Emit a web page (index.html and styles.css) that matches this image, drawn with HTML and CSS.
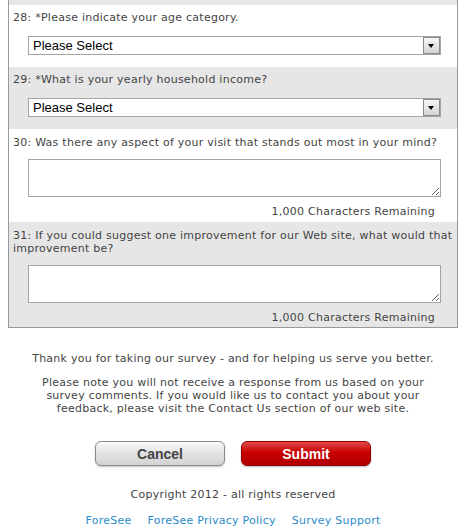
FILE: index.html
```html
<!DOCTYPE html>
<html lang="en">
<head>
    <meta charset="UTF-8">
    <title>Survey</title>
    <link rel="stylesheet" href="styles.css">
</head>
<body>
    <div class="survey-panel">
        <!-- tail of question 27 -->
        <div class="question alt prev"></div>

        <div class="question">
            <div class="label">28: *Please indicate your age category.</div>
            <div class="field">
                <div class="select-wrap">
                    <select>
                        <option>Please Select</option>
                    </select>
                    <span class="arrow"></span>
                </div>
            </div>
        </div>

        <div class="question alt">
            <div class="label">29: *What is your yearly household income?</div>
            <div class="field">
                <div class="select-wrap">
                    <select>
                        <option>Please Select</option>
                    </select>
                    <span class="arrow"></span>
                </div>
            </div>
        </div>

        <div class="question open">
            <div class="label">30: Was there any aspect of your visit that stands out most in your mind?</div>
            <div class="field">
                <textarea></textarea>
                <div class="counter">1,000 Characters Remaining</div>
            </div>
        </div>

        <div class="question alt open">
            <div class="label">31: If you could suggest one improvement for our Web site, what would that improvement be?</div>
            <div class="field">
                <textarea></textarea>
                <div class="counter">1,000 Characters Remaining</div>
            </div>
        </div>
    </div>

    <div class="footer">
        <p class="thanks">Thank you for taking our survey - and for helping us serve you better.</p>
        <p class="note">Please note you will not receive a response from us based on your survey comments. If you would like us to contact you about your feedback, please visit the Contact Us section of our web site.</p>

        <div class="actions">
            <button class="btn btn-cancel">Cancel</button>
            <button class="btn btn-submit">Submit</button>
        </div>

        <p class="copyright">Copyright 2012 - all rights reserved</p>

        <div class="links">
            <a href="#">ForeSee</a>
            <a href="#">ForeSee Privacy Policy</a>
            <a href="#">Survey Support</a>
        </div>
    </div>
</body>
</html>
```

FILE: styles.css
```css
body {
    margin: 0 8px;
    font-family: "DejaVu Sans", Verdana, sans-serif;
    font-size: 11px;
    letter-spacing: 0.25px;
    color: #444;
    background: #fff;
}

.survey-panel {
    width: 450px;
    box-sizing: border-box;
    border: 1px solid #999;
    border-top: none;
}

.question {
    padding: 6px 0 12px 4px;
    background: #fff;
}

.question.alt {
    background: #e6e6e6;
}

.question.prev {
    height: 5px;
    padding: 0;
}

.question.open {
    padding-top: 7px;
    padding-bottom: 3px;
}

.question.open:last-child {
    padding-bottom: 2px;
}

.label {
    line-height: 14px;
}

.open .label {
    line-height: 13px;
}

.field {
    margin: 11px 0 0 15px;
    width: 413px;
}

.open .field {
    margin-top: 10px;
}

.select-wrap {
    position: relative;
    height: 19px;
}

.select-wrap select {
    display: block;
    appearance: none;
    -webkit-appearance: none;
    width: 100%;
    height: 19px;
    box-sizing: border-box;
    margin: 0;
    border: 1px solid #a5a5a5;
    border-radius: 0;
    background: #fff;
    padding: 0 22px 0 4px;
    font-family: "Liberation Sans", Arial, sans-serif;
    font-size: 13px;
    letter-spacing: 0;
    color: #000;
    outline: none;
}

.select-wrap .arrow {
    position: absolute;
    top: 1px;
    right: 1px;
    width: 17px;
    height: 17px;
    box-sizing: border-box;
    border: 1px solid #8a8a8a;
    background: linear-gradient(#f6f6f6, #d4d4d4);
}

.select-wrap .arrow::after {
    content: "";
    position: absolute;
    left: 4px;
    top: 6px;
    border-left: 3.5px solid transparent;
    border-right: 3.5px solid transparent;
    border-top: 4px solid #000;
}

textarea {
    display: block;
    width: 413px;
    height: 38px;
    box-sizing: border-box;
    margin: 0;
    border: 1px solid #a5a5a5;
    border-radius: 0;
    padding: 2px;
    font-family: "Liberation Sans", Arial, sans-serif;
    font-size: 13px;
    outline: none;
}

.counter {
    margin-top: 8px;
    padding-right: 6px;
    text-align: right;
    line-height: 14px;
}

.footer {
    width: 450px;
    text-align: center;
}

.footer p {
    margin: 0;
    line-height: 13px;
}

.thanks {
    padding-top: 24px;
}

.footer .note {
    margin-top: 11px;
    padding: 0 30px;
}

.actions {
    display: flex;
    justify-content: center;
    gap: 16px;
    margin-top: 26px;
}

.btn {
    width: 130px;
    height: 25px;
    border-radius: 6px;
    font-family: "Liberation Sans", Arial, sans-serif;
    font-size: 14px;
    font-weight: bold;
    letter-spacing: 0;
    cursor: pointer;
    box-shadow: 0 1px 2px rgba(0, 0, 0, 0.25);
}

.btn-cancel {
    color: #444;
    border: 1px solid #8c8c8c;
    background: linear-gradient(#fafafa 0%, #e4e4e4 45%, #d2d2d2 100%);
}

.btn-submit {
    color: #fff;
    border: 1px solid #8e0000;
    background: linear-gradient(#e24a4a 0%, #c80000 45%, #b00000 100%);
}

.footer .copyright {
    margin-top: 22px;
}

.links {
    display: flex;
    justify-content: center;
    gap: 16px;
    margin-top: 13px;
    line-height: 13px;
}

.links a {
    color: #2a8ccc;
    text-decoration: none;
}
```
